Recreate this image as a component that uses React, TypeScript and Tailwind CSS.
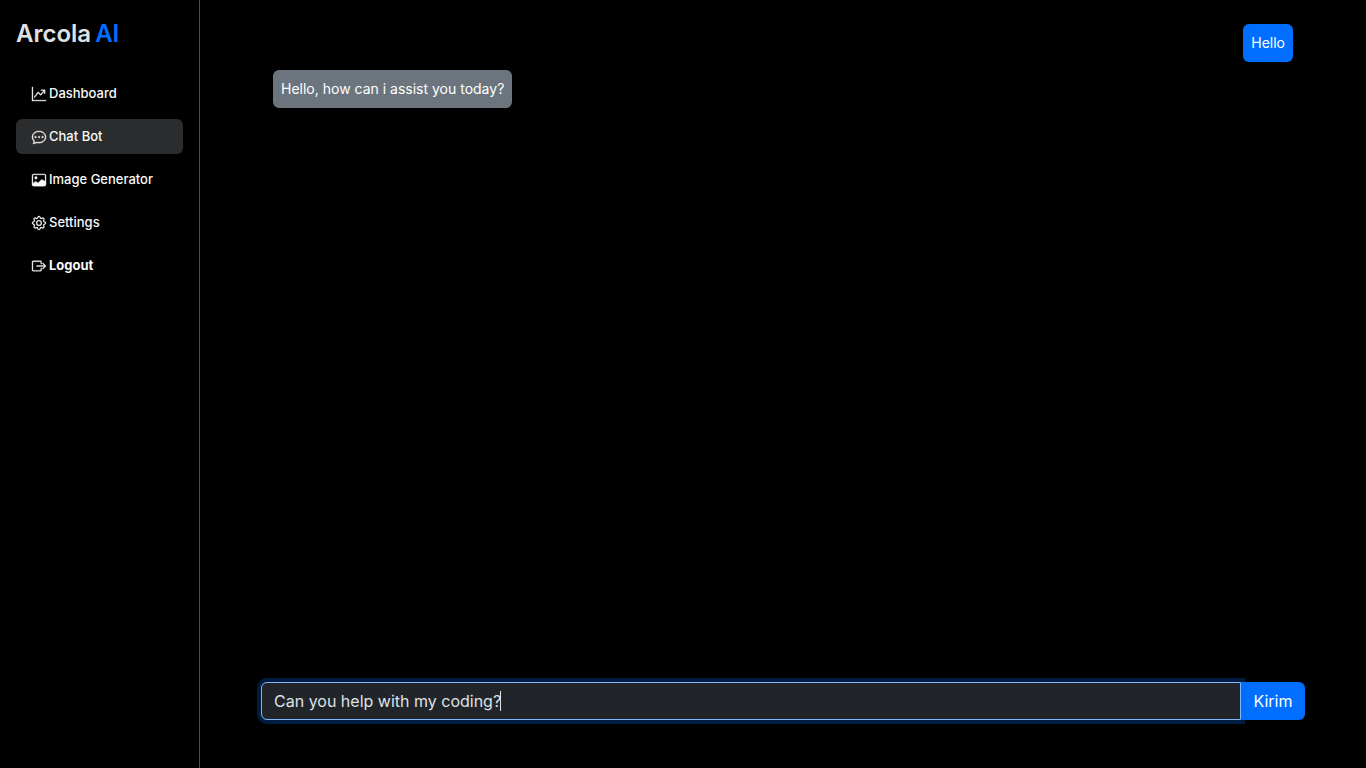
import { useState } from "react";
import type { IconType } from "react-icons";
import {
  BsBoxArrowRight,
  BsChatDots,
  BsGear,
  BsGraphUpArrow,
  BsImage,
} from "react-icons/bs";

type NavItem = {
  label: string;
  icon: IconType;
  active?: boolean;
  bold?: boolean;
};

const navItems: NavItem[] = [
  { label: "Dashboard", icon: BsGraphUpArrow },
  { label: "Chat Bot", icon: BsChatDots, active: true },
  { label: "Image Generator", icon: BsImage },
  { label: "Settings", icon: BsGear },
  { label: "Logout", icon: BsBoxArrowRight, bold: true },
];

function Sidebar() {
  return (
    <aside className="w-[200px] shrink-0 border-r border-[#495057] px-4 pt-4">
      <h1 className="flex gap-1 text-2xl leading-9 font-semibold text-[#dee2e6]">
        <span>Arcola</span>
        <span className="text-[#006fff]">AI</span>
      </h1>
      <nav className="mt-6">
        <ul className="flex flex-col gap-2">
          {navItems.map(({ label, icon: Icon, active, bold }) => (
            <li key={label}>
              <a
                href="#"
                aria-current={active ? "page" : undefined}
                className={`flex h-[35px] items-center gap-[3px] rounded-md px-4 text-[13px] text-[#f8f9fa] ${
                  active ? "bg-[#2b2c2d]" : ""
                } ${bold ? "font-bold" : "font-medium"}`}
              >
                <Icon
                  className="size-[14px] overflow-visible stroke-current [stroke-width:0.4]"
                  aria-hidden="true"
                />
                {label}
              </a>
            </li>
          ))}
        </ul>
      </nav>
    </aside>
  );
}

export default function App() {
  const [message, setMessage] = useState("Can you help with my coding?");

  return (
    <div className="flex min-h-screen bg-black font-['Inter',sans-serif]">
      <Sidebar />
      <main className="flex grow flex-col px-[61px] pt-6 pb-12">
        <div className="flex grow flex-col gap-2 px-3 text-sm leading-[22px] text-white">
          <p className="self-end rounded-md bg-[#006fff] p-2">Hello</p>
          <p className="self-start rounded-md bg-[#6c757d] p-2">
            Hello, how can i assist you today?
          </p>
        </div>
        <form className="flex h-[38px]" onSubmit={(e) => e.preventDefault()}>
          <div className="relative flex grow">
            <input
              type="text"
              aria-label="Message"
              value={message}
              onChange={(e) => setMessage(e.target.value)}
              className="w-full rounded-l-md border border-[#80b7ff] bg-[#212529] px-3 text-base text-[#dee2e6] caret-transparent ring-4 ring-[#001c40] outline-none"
            />
            <span
              aria-hidden="true"
              className="absolute top-[9px] left-[239px] h-5 w-px bg-[#dee2e6]"
            />
          </div>
          <button
            type="submit"
            className="relative w-16 rounded-r-md bg-[#006fff] text-base text-white"
          >
            Kirim
          </button>
        </form>
      </main>
    </div>
  );
}
